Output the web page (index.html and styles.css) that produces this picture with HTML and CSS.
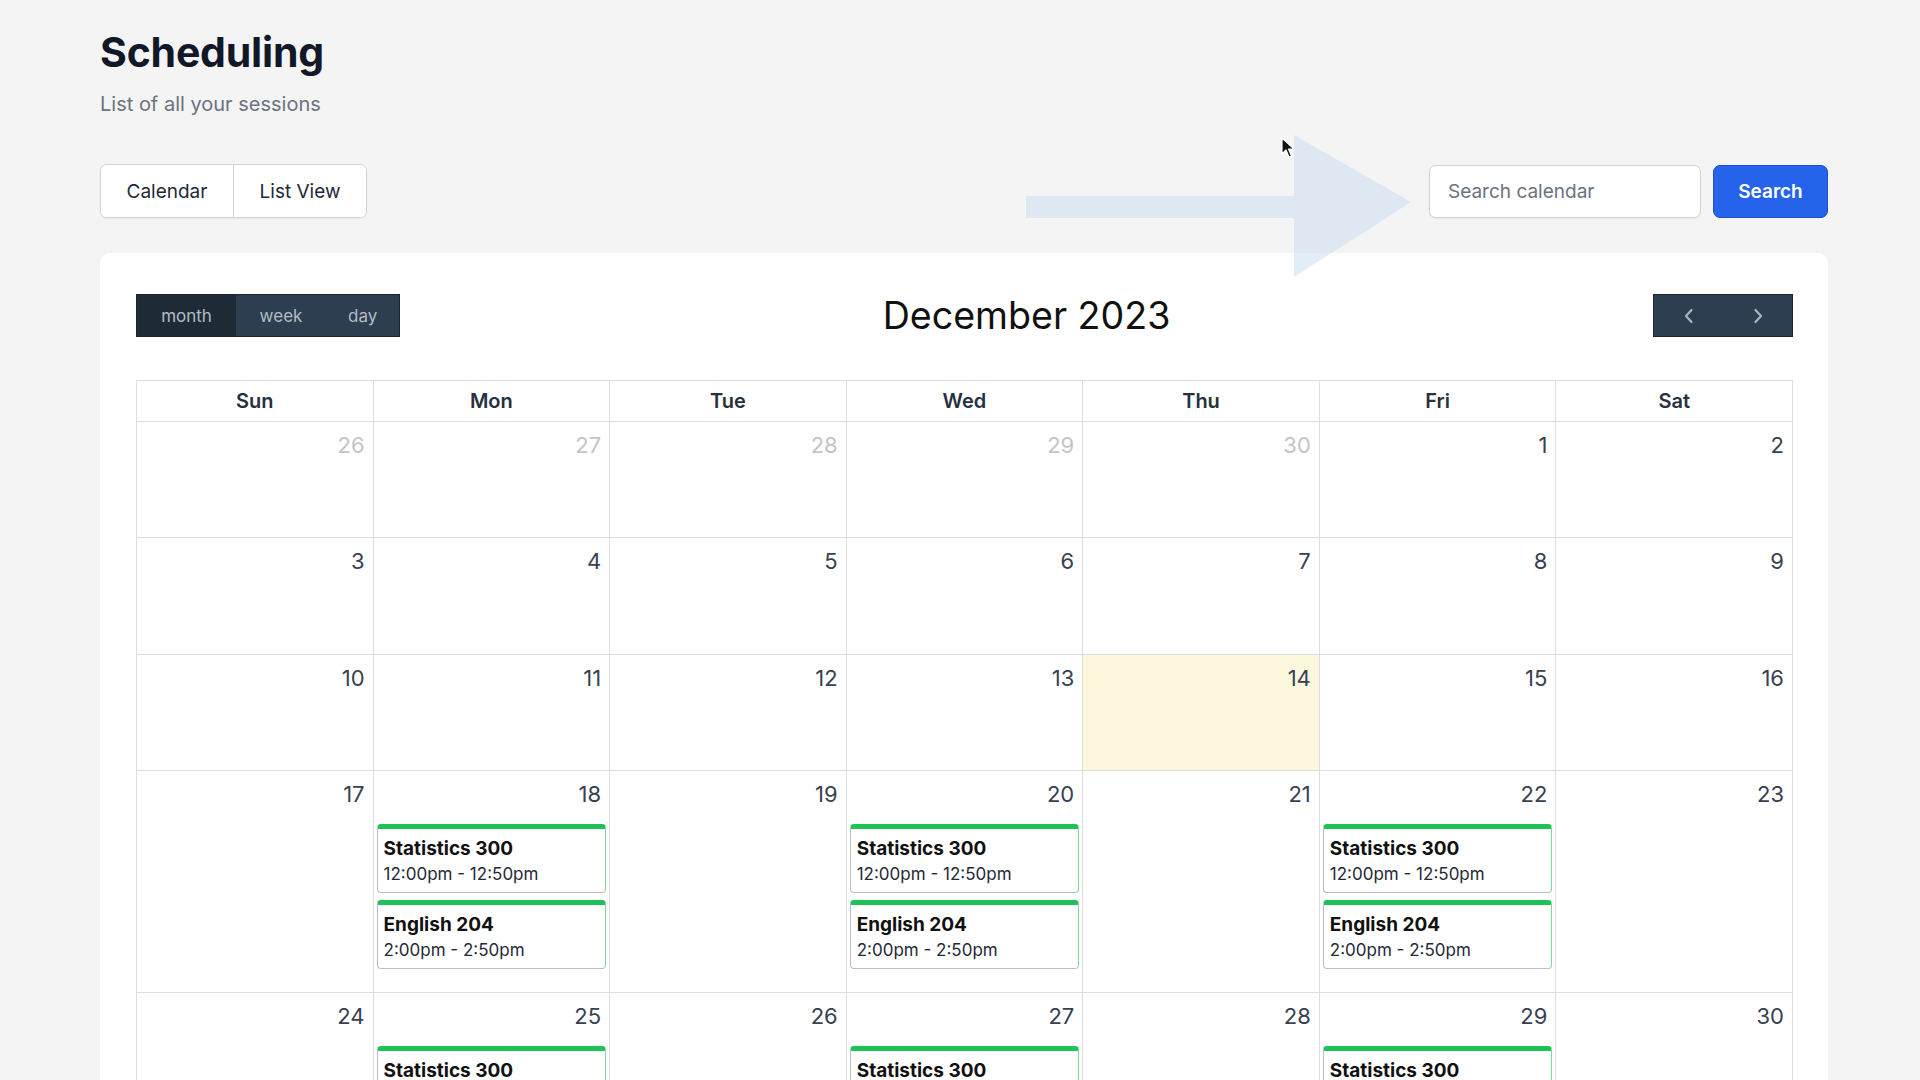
FILE: index.html
```html
<!DOCTYPE html>
<html lang="en">
<head>
    <meta charset="UTF-8">
    <meta name="viewport" content="width=device-width, initial-scale=1.0">
    <title>Scheduling</title>
    <link rel="stylesheet" href="styles.css">
</head>
<body>

    <div class="page">
        <h1 class="page-title">Scheduling</h1>
        <p class="page-sub">List of all your sessions</p>

        <div class="top-bar">
            <div class="view-tabs">
                <button class="tab">Calendar</button>
                <button class="tab">List View</button>
            </div>
            <div class="search-box">
                <input type="text" class="search-input" placeholder="Search calendar">
                <button class="search-button">Search</button>
            </div>
        </div>

        <div class="calendar-card">
            <div class="cal-toolbar">
                <div class="btn-group">
                    <button class="cal-btn active">month</button>
                    <button class="cal-btn">week</button>
                    <button class="cal-btn">day</button>
                </div>
                <h2 class="cal-title">December 2023</h2>
                <div class="btn-group">
                    <button class="cal-btn nav-btn">
                        <svg width="10" height="16" viewBox="0 0 10 16"><path d="M7.5 2 L2 8 L7.5 14" fill="none" stroke="#aab4bf" stroke-width="2.2" stroke-linecap="round" stroke-linejoin="round"/></svg>
                    </button>
                    <button class="cal-btn nav-btn">
                        <svg width="10" height="16" viewBox="0 0 10 16"><path d="M2.5 2 L8 8 L2.5 14" fill="none" stroke="#aab4bf" stroke-width="2.2" stroke-linecap="round" stroke-linejoin="round"/></svg>
                    </button>
                </div>
            </div>

            <table class="month-grid">
                <thead>
                    <tr>
                        <th>Sun</th><th>Mon</th><th>Tue</th><th>Wed</th><th>Thu</th><th>Fri</th><th>Sat</th>
                    </tr>
                </thead>
                <tbody>
                    <tr>
                        <td class="other"><div class="day-num">26</div></td>
                        <td class="other"><div class="day-num">27</div></td>
                        <td class="other"><div class="day-num">28</div></td>
                        <td class="other"><div class="day-num">29</div></td>
                        <td class="other"><div class="day-num">30</div></td>
                        <td><div class="day-num">1</div></td>
                        <td><div class="day-num">2</div></td>
                    </tr>
                    <tr>
                        <td><div class="day-num">3</div></td>
                        <td><div class="day-num">4</div></td>
                        <td><div class="day-num">5</div></td>
                        <td><div class="day-num">6</div></td>
                        <td><div class="day-num">7</div></td>
                        <td><div class="day-num">8</div></td>
                        <td><div class="day-num">9</div></td>
                    </tr>
                    <tr>
                        <td><div class="day-num">10</div></td>
                        <td><div class="day-num">11</div></td>
                        <td><div class="day-num">12</div></td>
                        <td><div class="day-num">13</div></td>
                        <td class="today"><div class="day-num">14</div></td>
                        <td><div class="day-num">15</div></td>
                        <td><div class="day-num">16</div></td>
                    </tr>
                    <tr>
                        <td><div class="day-num">17</div></td>
                        <td>
                            <div class="day-num">18</div>
                            <div class="events">
                                <div class="event"><div class="event-name">Statistics 300</div><div class="event-time">12:00pm - 12:50pm</div></div>
                                <div class="event"><div class="event-name">English 204</div><div class="event-time">2:00pm - 2:50pm</div></div>
                            </div>
                        </td>
                        <td><div class="day-num">19</div></td>
                        <td>
                            <div class="day-num">20</div>
                            <div class="events">
                                <div class="event"><div class="event-name">Statistics 300</div><div class="event-time">12:00pm - 12:50pm</div></div>
                                <div class="event"><div class="event-name">English 204</div><div class="event-time">2:00pm - 2:50pm</div></div>
                            </div>
                        </td>
                        <td><div class="day-num">21</div></td>
                        <td>
                            <div class="day-num">22</div>
                            <div class="events">
                                <div class="event"><div class="event-name">Statistics 300</div><div class="event-time">12:00pm - 12:50pm</div></div>
                                <div class="event"><div class="event-name">English 204</div><div class="event-time">2:00pm - 2:50pm</div></div>
                            </div>
                        </td>
                        <td><div class="day-num">23</div></td>
                    </tr>
                    <tr>
                        <td><div class="day-num">24</div></td>
                        <td>
                            <div class="day-num">25</div>
                            <div class="events">
                                <div class="event"><div class="event-name">Statistics 300</div><div class="event-time">12:00pm - 12:50pm</div></div>
                                <div class="event"><div class="event-name">English 204</div><div class="event-time">2:00pm - 2:50pm</div></div>
                            </div>
                        </td>
                        <td><div class="day-num">26</div></td>
                        <td>
                            <div class="day-num">27</div>
                            <div class="events">
                                <div class="event"><div class="event-name">Statistics 300</div><div class="event-time">12:00pm - 12:50pm</div></div>
                                <div class="event"><div class="event-name">English 204</div><div class="event-time">2:00pm - 2:50pm</div></div>
                            </div>
                        </td>
                        <td><div class="day-num">28</div></td>
                        <td>
                            <div class="day-num">29</div>
                            <div class="events">
                                <div class="event"><div class="event-name">Statistics 300</div><div class="event-time">12:00pm - 12:50pm</div></div>
                                <div class="event"><div class="event-name">English 204</div><div class="event-time">2:00pm - 2:50pm</div></div>
                            </div>
                        </td>
                        <td><div class="day-num">30</div></td>
                    </tr>
                    <tr>
                        <td><div class="day-num">31</div></td>
                        <td class="other"><div class="day-num">1</div></td>
                        <td class="other"><div class="day-num">2</div></td>
                        <td class="other"><div class="day-num">3</div></td>
                        <td class="other"><div class="day-num">4</div></td>
                        <td class="other"><div class="day-num">5</div></td>
                        <td class="other"><div class="day-num">6</div></td>
                    </tr>
                </tbody>
            </table>
        </div>
    </div>

    <!-- pointer overlay from the recording -->
    <svg class="hint-arrow" width="400" height="150" viewBox="0 0 400 150">
        <path d="M0 61 H268 V0 L385 67 L268 142 V83 H0 Z" fill="rgba(200,220,240,0.5)"/>
    </svg>
    <svg class="cursor" width="14" height="22" viewBox="0 0 14 22">
        <path d="M1 1 V17 L5 13 L8 20 L10.5 19 L7.5 12 H13 Z" fill="#111" stroke="#fff" stroke-width="1.2" stroke-linejoin="round"/>
    </svg>

</body>
</html>
```

FILE: styles.css
```css
* {
    box-sizing: border-box;
}
html, body {
    overflow: hidden;
}
body {
    margin: 0;
    background-color: #f4f4f5;
    font-family: Inter, "Noto Sans", sans-serif;
    color: #111827;
}
.page {
    width: 1728px;
    margin-left: 100px;
    padding-top: 27px;
}
.page-title {
    margin: 0;
    font-size: 41px;
    line-height: 50px;
    font-weight: 700;
    color: #111827;
    letter-spacing: -0.2px;
}
.page-sub {
    margin: 13px 0 0;
    font-size: 20px;
    line-height: 28px;
    color: #6b7280;
}
.top-bar {
    display: flex;
    justify-content: space-between;
    align-items: center;
    margin-top: 46px;
}
.view-tabs {
    display: flex;
    background-color: #fff;
    border: 1px solid #d1d5db;
    border-radius: 7px;
    box-shadow: 0 1px 2px rgba(0, 0, 0, 0.06);
    overflow: hidden;
}
.tab {
    height: 52px;
    padding: 0 19px;
    border: none;
    background: #fff;
    font-family: inherit;
    font-size: 19px;
    color: #1f2937;
}
.tab + .tab {
    border-left: 1px solid #d1d5db;
}
.tab:first-child {
    width: 132px;
}
.tab:last-child {
    width: 133px;
}
.search-box {
    display: flex;
    gap: 12px;
}
.search-input {
    width: 272px;
    height: 53px;
    padding: 0 18px;
    border: 1px solid #d1d5db;
    border-radius: 7px;
    font-family: inherit;
    font-size: 19px;
    color: #111827;
    background: #fff;
    box-shadow: 0 1px 2px rgba(0, 0, 0, 0.05);
}
.search-input::placeholder {
    color: #6b7280;
}
.search-button {
    width: 115px;
    height: 53px;
    border: 1px solid #1d4ed8;
    border-radius: 7px;
    background-color: #2563eb;
    color: #fff;
    font-family: inherit;
    font-size: 19px;
    font-weight: 600;
}
.calendar-card {
    margin-top: 35px;
    background-color: #fff;
    border-radius: 10px;
    padding: 41px 35px 40px 36px;
}
.cal-toolbar {
    display: flex;
    justify-content: space-between;
    align-items: center;
    height: 43px;
}
.btn-group {
    display: flex;
    border: 1px solid #1a252f;
}
.cal-btn {
    height: 41px;
    padding: 0 22px;
    border: none;
    background-color: #2c3e50;
    color: #b4bcc5;
    font-family: inherit;
    font-size: 17px;
}
.cal-btn.active {
    background-color: #1e2b37;
}
.cal-btn:first-child {
    width: 99px;
}
.cal-btn:nth-child(2) {
    width: 90px;
}
.cal-btn:nth-child(3) {
    width: 73px;
}
.nav-btn {
    width: 69px !important;
    padding: 0;
    display: flex;
    align-items: center;
    justify-content: center;
}
.cal-title {
    margin: 0;
    font-size: 37.6px;
    font-weight: 400;
    color: #111;
}
.month-grid {
    width: 100%;
    margin-top: 43px;
    border-collapse: collapse;
    table-layout: fixed;
}
.month-grid th,
.month-grid td {
    border: 1px solid #dedede;
}
.month-grid th {
    height: 41px;
    font-size: 20px;
    font-weight: 600;
    color: #27303d;
}
.month-grid td {
    height: 116.3px;
    vertical-align: top;
    padding: 0;
}
.month-grid td.today {
    background-color: #fdf7de;
}
.day-num {
    padding: 8px 8px 0;
    text-align: right;
    font-size: 22px;
    line-height: 30px;
    color: #374151;
}
.other .day-num {
    color: #c4c4c4;
}
.events {
    display: flex;
    flex-direction: column;
    gap: 7px;
    padding: 15px 3px 23px;
}
.event {
    border: 1px solid #b9bec4;
    border-right-color: #7dd89a;
    border-top: 5px solid #1fc256;
    border-radius: 4px;
    padding: 8px 6px 7px;
    color: #111;
}
.event-name {
    font-size: 19px;
    line-height: 24px;
    font-weight: 700;
}
.event-time {
    margin-top: 2px;
    font-size: 17px;
    line-height: 22px;
    color: #1f2937;
}
.hint-arrow {
    position: absolute;
    left: 1026px;
    top: 135px;
}
.cursor {
    position: absolute;
    left: 1281px;
    top: 137px;
}
```
